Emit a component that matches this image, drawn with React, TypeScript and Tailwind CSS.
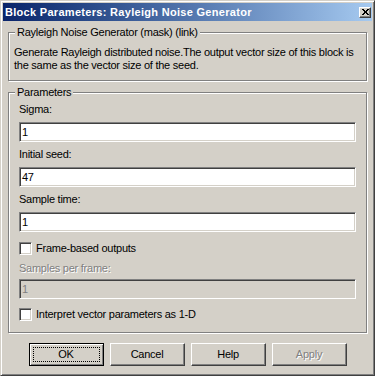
import type { ReactNode } from 'react';

// Win2000-style "Block Parameters" dialog.
const sunken =
  'border border-t-[#808080] border-l-[#808080] border-r-white border-b-white shadow-[inset_1px_1px_0_#404040,inset_-1px_-1px_0_#d4d0c8]';

function Field({ value, disabled }: { value: string; disabled?: boolean }) {
  return (
    <div
      className={`h-[20px] px-[2px] leading-[18px] ${sunken} ${
        disabled ? 'bg-[#d4d0c8] text-[#808080]' : 'bg-white text-black'
      }`}
    >
      {value}
    </div>
  );
}

function Check({ label }: { label: string }) {
  return (
    <div className="flex h-[13px] items-center gap-[4px]">
      <span className={`h-[13px] w-[13px] shrink-0 bg-white ${sunken}`} />
      <span className="leading-[13px]">{label}</span>
    </div>
  );
}

function Btn({ children, isDefault, disabled }: { children: ReactNode; isDefault?: boolean; disabled?: boolean }) {
  if (isDefault) {
    return (
      <div className="flex h-[23px] w-[75px] items-center justify-center border border-black p-[3px] shadow-[inset_1px_1px_0_#fff,inset_-1px_-1px_0_#808080]">
        <div className="flex h-full w-full items-center justify-center border border-dotted border-black leading-[13px]">
          {children}
        </div>
      </div>
    );
  }
  return (
    <div
      className={`flex h-[23px] w-[75px] items-center justify-center border border-t-white border-l-white border-r-[#404040] border-b-[#404040] leading-[13px] shadow-[inset_-1px_-1px_0_#808080] ${
        disabled ? 'text-[#808080] [text-shadow:1px_1px_0_#fff]' : ''
      }`}
    >
      {children}
    </div>
  );
}

export default function App() {
  return (
    <div className="h-[376px] w-[375px] overflow-hidden bg-[#d4d0c8] font-['Liberation_Sans',Arial,sans-serif] text-[11px] tracking-[-0.25px] text-black">
      <div className="flex h-full w-full flex-col border border-t-[#d4d0c8] border-l-[#d4d0c8] border-r-[#404040] border-b-[#404040] p-[2px] shadow-[inset_1px_1px_0_#fff,inset_-1px_-1px_0_#808080]">
        {/* title bar */}
        <div className="flex h-[18px] shrink-0 items-center bg-gradient-to-r from-[#0a246a] to-[#a6caf0] pl-[2px]">
          <span className="flex-1 whitespace-nowrap text-[11px] font-bold leading-[13px] tracking-[0.3px] text-white">
            Block Parameters: Rayleigh Noise Generator
          </span>
          <span className="mr-[1px] flex h-[11px] w-[12px] items-center justify-center border border-t-white border-l-white border-r-[#404040] border-b-[#404040] bg-[#d4d0c8] shadow-[inset_-1px_-1px_0_#808080]">
            <svg width="7" height="6" viewBox="0 0 7 6" shapeRendering="crispEdges">
              <path d="M0 0h2v1h-2zM5 0h2v1h-2zM1 1h2v1h-2zM4 1h2v1h-2zM2 2h3v2h-3zM1 4h2v1h-2zM4 4h2v1h-2zM0 5h2v1h-2zM5 5h2v1h-2z" fill="#000" />
            </svg>
          </span>
        </div>

        <fieldset className="mx-[5px] mt-[5px] border border-[#808080] px-[5px] pb-[8px] pt-[7px] shadow-[inset_1px_1px_0_#fff,1px_1px_0_#fff]">
          <legend className="ml-[1px] bg-[#d4d0c8] px-[2px] leading-[13px]">Rayleigh Noise Generator (mask) (link)</legend>
          <p className="whitespace-nowrap leading-[13px]">
            Generate Rayleigh distributed noise.The output vector size of this block is
            <br />
            the same as the vector size of the seed.
          </p>
        </fieldset>

        <fieldset className="mx-[5px] mt-[5px] border border-[#808080] px-[5px] pb-[11px] pt-[4px] shadow-[inset_1px_1px_0_#fff,1px_1px_0_#fff]">
          <legend className="ml-[1px] bg-[#d4d0c8] px-[2px] leading-[13px]">Parameters</legend>
          <div className="flex flex-col px-[5px]">
            <div className="leading-[13px]">Sigma:</div>
            <div className="mt-[6px]"><Field value="1" /></div>
            <div className="mt-[6px] leading-[13px]">Initial seed:</div>
            <div className="mt-[6px]"><Field value="47" /></div>
            <div className="mt-[6px] leading-[13px]">Sample time:</div>
            <div className="mt-[6px]"><Field value="1" /></div>
            <div className="mt-[10px]"><Check label="Frame-based outputs" /></div>
            <div className="mt-[7px] leading-[13px] text-[#808080] [text-shadow:1px_1px_0_#fff]">Samples per frame:</div>
            <div className="mt-[4px]"><Field value="1" disabled /></div>
            <div className="mt-[9px]"><Check label="Interpret vector parameters as 1-D" /></div>
          </div>
        </fieldset>

        <div className="mt-[10px] flex justify-center gap-[6px]">
          <Btn isDefault>OK</Btn>
          <Btn>Cancel</Btn>
          <Btn>Help</Btn>
          <Btn disabled>Apply</Btn>
        </div>
      </div>
    </div>
  );
}
